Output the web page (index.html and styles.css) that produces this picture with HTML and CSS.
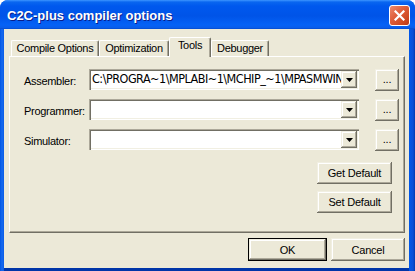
FILE: index.html
```html
<!DOCTYPE html>
<html lang="en">
<head>
  <meta charset="UTF-8">
  <title>C2C-plus compiler options</title>
  <link rel="stylesheet" href="styles.css">
</head>
<body>

<div class="window">
  <div class="titlebar">
    <span class="title">C2C-plus compiler options</span>
    <span class="close">
      <svg width="11" height="11" viewBox="0 0 11 11"><path d="M1.5 1.5 L9.5 9.5 M9.5 1.5 L1.5 9.5" stroke="#fff" stroke-width="2.2" stroke-linecap="square"/></svg>
    </span>
  </div>

  <div class="client">
    <!-- sekmeler -->
    <div class="tabs">
      <div class="tab tab-compile">Compile Options</div>
      <div class="tab tab-opt">Optimization</div>
      <div class="tab tab-tools selected">Tools</div>
      <div class="tab tab-debug">Debugger</div>
    </div>

    <div class="panel">
      <div class="fields">
        <div class="label">Assembler:</div>
        <div class="combo">
          <span class="combo-text">C:\PROGRA~1\MPLABI~1\MCHIP_~1\MPASMWIN</span>
          <span class="combo-btn"><svg width="7" height="4" viewBox="0 0 7 4"><path d="M0 0 H7 L3.5 4 Z" fill="#000"/></svg></span>
        </div>
        <button class="btn btn-browse">...</button>

        <div class="label">Programmer:</div>
        <div class="combo">
          <span class="combo-text"></span>
          <span class="combo-btn"><svg width="7" height="4" viewBox="0 0 7 4"><path d="M0 0 H7 L3.5 4 Z" fill="#000"/></svg></span>
        </div>
        <button class="btn btn-browse">...</button>

        <div class="label">Simulator:</div>
        <div class="combo">
          <span class="combo-text"></span>
          <span class="combo-btn"><svg width="7" height="4" viewBox="0 0 7 4"><path d="M0 0 H7 L3.5 4 Z" fill="#000"/></svg></span>
        </div>
        <button class="btn btn-browse">...</button>
      </div>

      <div class="side-buttons">
        <button class="btn btn-wide">Get Default</button>
        <button class="btn btn-wide">Set Default</button>
      </div>
    </div>

    <div class="footer">
      <button class="btn btn-ok">OK</button>
      <button class="btn btn-cancel">Cancel</button>
    </div>
  </div>
</div>

</body>
</html>
```

FILE: styles.css
```css
* {
  box-sizing: border-box;
}

body {
  margin: 0;
  background: #ffffff;
  font-family: "Liberation Sans", Arial, sans-serif;
  font-size: 11px;
  letter-spacing: -0.3px;
  color: #000;
}

.window {
  width: 415px;
  height: 271px;
  display: flex;
  flex-direction: column;
  background: linear-gradient(to right, #0055e5 0, #166aee 2px, #0a5ce8 4px, #0058ea 409px, #0a4fd6 413px, #003bb0 415px);
  border-radius: 8px 8px 0 0;
  overflow: hidden;
}

.titlebar {
  height: 29px;
  flex: none;
  display: flex;
  align-items: flex-start;
  justify-content: space-between;
  padding: 5px 5px 0 7px;
  background: linear-gradient(to bottom, #3d95ff 0, #0a66f0 2px, #0058ee 6px, #0054e8 16px, #0562f6 25px, #0a5ce8 28px, #0046c8 29px);
}

.title {
  margin-top: 3px;
  font-weight: bold;
  font-size: 13px;
  line-height: 16px;
  letter-spacing: 0;
  color: #fff;
  text-shadow: 1px 1px #0a1e8a;
}

.close {
  width: 21px;
  height: 21px;
  display: flex;
  align-items: center;
  justify-content: center;
  border: 1px solid #fff;
  border-radius: 3px;
  background: linear-gradient(135deg, #ec8a6e 0, #e0603c 40%, #cf4a22 75%, #b8391a 100%);
}

.client {
  flex: 1;
  display: flex;
  flex-direction: column;
  margin: 0 6px 3px 4px;
  padding: 8px 4px 0 5px;
  background: #ece9d8;
  box-shadow: 0 3px 0 #0035a8;
}

/* sekme şeridi */
.tabs {
  height: 19px;
  display: flex;
  align-items: flex-end;
  padding-left: 2px;
  position: relative;
  z-index: 1;
}

.tab {
  height: 16px;
  padding-top: 1px;
  line-height: 13px;
  text-align: center;
  border-top: 1px solid #fff;
  border-left: 1px solid #fff;
  border-right: 1px solid #716f64;
  border-radius: 2px 2px 0 0;
  box-shadow: inset -1px 0 #aca899;
  background: #ece9d8;
}

.tab-compile { width: 88px; }
.tab-opt { width: 70px; }
.tab-tools { width: 42px; }
.tab-debug { width: 58px; }

.tab.selected {
  height: 20px;
  margin-bottom: -1px;
}

.panel {
  height: 177px;
  flex: none;
  padding: 11px 12px 0 14px;
  border-top: 1px solid #fff;
  border-left: 1px solid #fff;
  border-right: 1px solid #716f64;
  border-bottom: 1px solid #716f64;
  box-shadow: inset -1px -1px #aca899;
}

.fields {
  display: grid;
  grid-template-columns: 65px 270px 24px;
  grid-auto-rows: 23px;
  row-gap: 7px;
  column-gap: 8px;
  align-items: center;
}

.fields .combo {
  margin-left: -8px;
  width: 270px;
}

.label {
  padding-top: 3px;
  line-height: 13px;
  white-space: nowrap;
}

.combo {
  height: 21px;
  display: flex;
  padding: 2px;
  background: #fff;
  box-shadow: inset 1px 1px #aca899, inset 2px 2px #716f64, inset -1px -1px #fff, inset -2px -2px #f1efe2;
}

.combo-text {
  flex: 1;
  overflow: hidden;
  white-space: nowrap;
  padding-left: 1px;
  font-family: "Liberation Sans Narrow", "DejaVu Sans Condensed", "Liberation Sans", sans-serif;
  font-size: 12.5px;
  letter-spacing: -0.5px;
  line-height: 15px;
}

.combo-btn {
  width: 16px;
  height: 17px;
  display: flex;
  align-items: center;
  justify-content: center;
  background: #ece9d8;
  box-shadow: inset -1px -1px #716f64, inset 1px 1px #f1efe2, inset -2px -2px #aca899, inset 2px 2px #fff;
}

.btn {
  margin: 0;
  padding: 0;
  border: none;
  background: #ece9d8;
  font-family: "Liberation Sans", Arial, sans-serif;
  font-size: 11px;
  letter-spacing: -0.2px;
  color: #000;
  box-shadow: inset -1px -1px #716f64, inset 1px 1px #f1efe2, inset -2px -2px #aca899, inset 2px 2px #fff;
}

.btn-browse {
  width: 24px;
  height: 22px;
  padding-bottom: 2px;
}

.side-buttons {
  display: flex;
  flex-direction: column;
  align-items: flex-end;
  gap: 7px;
  margin-top: 11px;
}

.btn-wide {
  width: 75px;
  height: 22px;
}

.footer {
  display: flex;
  justify-content: flex-end;
  gap: 4px;
  padding-top: 5px;
}

.btn-ok, .btn-cancel {
  height: 23px;
}

.btn-ok {
  width: 79px;
  border: 1px solid #000;
}

.btn-cancel {
  width: 74px;
}
```
